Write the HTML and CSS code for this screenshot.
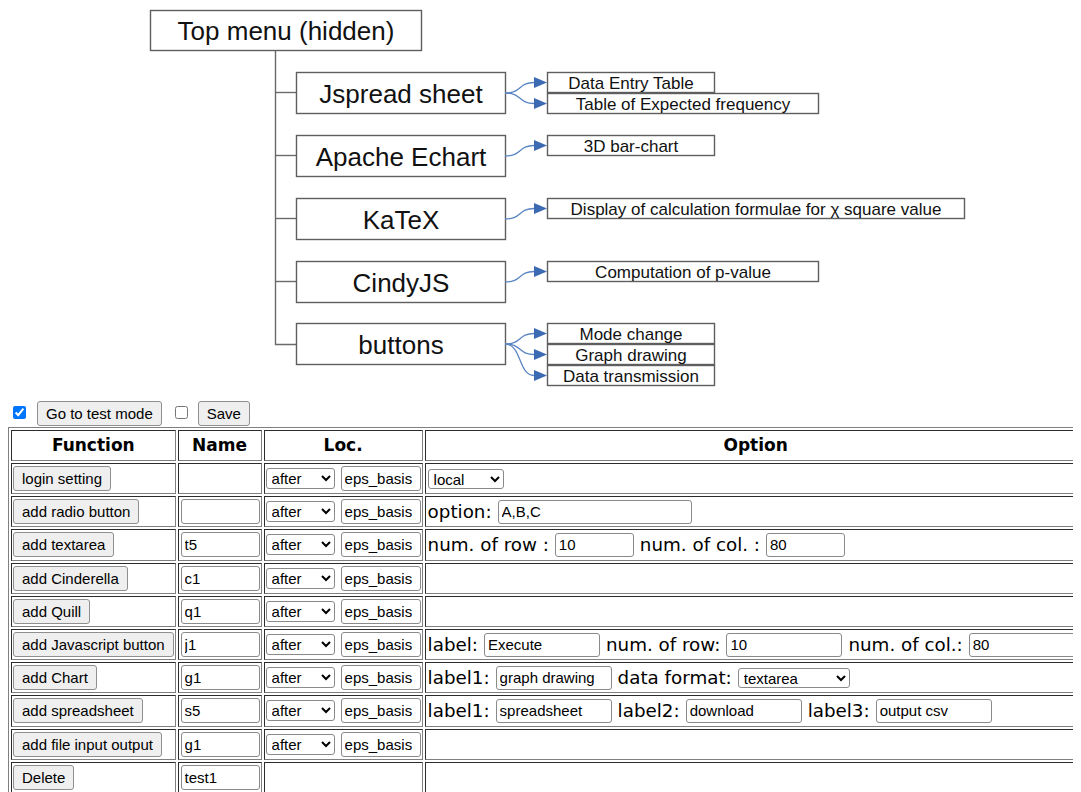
FILE: index.html
```html
<!DOCTYPE html>
<html lang="en">
<head>
<meta charset="utf-8">
<title>Menu editor</title>
<link rel="stylesheet" href="styles.css">
</head>
<body>
<svg class="menu-tree" width="970" height="392" viewBox="8 8 970 392" xmlns="http://www.w3.org/2000/svg">
  <defs>
    <marker id="arrow" viewBox="0 0 13 11" refX="0" refY="5.5" markerWidth="13" markerHeight="11" markerUnits="userSpaceOnUse" orient="auto">
      <path d="M0,0 L13,5.5 L0,11 Z" fill="#3d6bb3"/>
    </marker>
  </defs>

  <!-- trunk -->
  <g class="trunk">
    <path d="M275.5,50 V344.5 H296"/>
    <path d="M275.5,92.5 H296"/>
    <path d="M275.5,155.5 H296"/>
    <path d="M275.5,218.5 H296"/>
    <path d="M275.5,281.5 H296"/>
  </g>

  <!-- root -->
  <rect class="box" x="150.5" y="10.5" width="271" height="40"/>
  <text class="big" x="286" y="31">Top menu (hidden)</text>

  <!-- modules -->
  <rect class="box" x="296.5" y="72.5" width="209" height="41"/>
  <text class="big" x="401" y="93.5">Jspread sheet</text>
  <rect class="box" x="296.5" y="135.5" width="209" height="41"/>
  <text class="big" x="401" y="156.5">Apache Echart</text>
  <rect class="box" x="296.5" y="198.5" width="209" height="41"/>
  <text class="big" x="401" y="219.5">KaTeX</text>
  <rect class="box" x="296.5" y="261.5" width="209" height="41"/>
  <text class="big" x="401" y="282.5">CindyJS</text>
  <rect class="box" x="296.5" y="323.5" width="209" height="41"/>
  <text class="big" x="401" y="344.5">buttons</text>

  <!-- links to features -->
  <g class="link">
    <path d="M505,93 C522,93 518,82.5 534,82.5" marker-end="url(#arrow)"/>
    <path d="M505,93 C522,93 518,103.5 534,103.5" marker-end="url(#arrow)"/>
    <path d="M505,156 C522,156 518,145.5 534,145.5" marker-end="url(#arrow)"/>
    <path d="M505,219 C522,219 518,208.5 534,208.5" marker-end="url(#arrow)"/>
    <path d="M505,282 C522,282 518,271.5 534,271.5" marker-end="url(#arrow)"/>
    <path d="M505,344 C522,344 518,333.5 534,333.5" marker-end="url(#arrow)"/>
    <path d="M505,344 C522,344 518,354.5 534,354.5" marker-end="url(#arrow)"/>
    <path d="M505,344 C522,344 518,375.5 534,375.5" marker-end="url(#arrow)"/>
  </g>

  <!-- features -->
  <rect class="leaf" x="547.5" y="72.5" width="167" height="20"/>
  <text class="small" x="631" y="83">Data Entry Table</text>
  <rect class="leaf" x="547.5" y="93.5" width="271" height="20"/>
  <text class="small" x="683" y="104">Table of Expected frequency</text>
  <rect class="leaf" x="547.5" y="135.5" width="167" height="20"/>
  <text class="small" x="631" y="146">3D bar-chart</text>
  <rect class="leaf" x="547.5" y="198.5" width="417" height="20"/>
  <text class="small" x="756" y="209">Display of calculation formulae for χ square value</text>
  <rect class="leaf" x="547.5" y="261.5" width="271" height="20"/>
  <text class="small" x="683" y="272">Computation of p-value</text>
  <rect class="leaf" x="547.5" y="323.5" width="167" height="20"/>
  <text class="small" x="631" y="334">Mode change</text>
  <rect class="leaf" x="547.5" y="344.5" width="167" height="20"/>
  <text class="small" x="631" y="355">Graph drawing</text>
  <rect class="leaf" x="547.5" y="365.5" width="167" height="20"/>
  <text class="small" x="631" y="376">Data transmission</text>
</svg>

<div class="toolbar">
  <input type="checkbox" class="check" checked>
  <button class="btn btn-mode">Go to test mode</button>
  <input type="checkbox" class="check check-save">
  <button class="btn btn-save">Save</button>
</div>

<table class="grid">
  <tr>
    <th>Function</th>
    <th>Name</th>
    <th>Loc.</th>
    <th class="col-option">Option</th>
  </tr>
  <tr>
    <td><div class="cell"><button class="btn">login setting</button></div></td>
    <td><div class="cell"></div></td>
    <td><div class="cell"><select class="loc"><option>after</option></select><input class="basis" value="eps_basis"></div></td>
    <td><div class="cell opts"><select class="opt-sel sel-local"><option>local</option></select></div></td>
  </tr>
  <tr>
    <td><div class="cell"><button class="btn">add radio button</button></div></td>
    <td><div class="cell"><input class="name" value=""></div></td>
    <td><div class="cell"><select class="loc"><option>after</option></select><input class="basis" value="eps_basis"></div></td>
    <td><div class="cell opts"><span>option:</span><input class="opt opt-wide" value="A,B,C"></div></td>
  </tr>
  <tr>
    <td><div class="cell"><button class="btn">add textarea</button></div></td>
    <td><div class="cell"><input class="name" value="t5"></div></td>
    <td><div class="cell"><select class="loc"><option>after</option></select><input class="basis" value="eps_basis"></div></td>
    <td><div class="cell opts"><span>num. of row :</span><input class="opt opt-short" value="10"><span>num. of col. :</span><input class="opt opt-short" value="80"></div></td>
  </tr>
  <tr>
    <td><div class="cell"><button class="btn">add Cinderella</button></div></td>
    <td><div class="cell"><input class="name" value="c1"></div></td>
    <td><div class="cell"><select class="loc"><option>after</option></select><input class="basis" value="eps_basis"></div></td>
    <td><div class="cell"></div></td>
  </tr>
  <tr>
    <td><div class="cell"><button class="btn">add Quill</button></div></td>
    <td><div class="cell"><input class="name" value="q1"></div></td>
    <td><div class="cell"><select class="loc"><option>after</option></select><input class="basis" value="eps_basis"></div></td>
    <td><div class="cell"></div></td>
  </tr>
  <tr>
    <td><div class="cell"><button class="btn">add Javascript button</button></div></td>
    <td><div class="cell"><input class="name" value="j1"></div></td>
    <td><div class="cell"><select class="loc"><option>after</option></select><input class="basis" value="eps_basis"></div></td>
    <td><div class="cell opts"><span>label:</span><input class="opt" value="Execute"><span>num. of row:</span><input class="opt" value="10"><span>num. of col.:</span><input class="opt" value="80"></div></td>
  </tr>
  <tr>
    <td><div class="cell"><button class="btn">add Chart</button></div></td>
    <td><div class="cell"><input class="name" value="g1"></div></td>
    <td><div class="cell"><select class="loc"><option>after</option></select><input class="basis" value="eps_basis"></div></td>
    <td><div class="cell opts"><span>label1:</span><input class="opt" value="graph drawing"><span>data format:</span><select class="opt-sel sel-format"><option>textarea</option></select></div></td>
  </tr>
  <tr>
    <td><div class="cell"><button class="btn">add spreadsheet</button></div></td>
    <td><div class="cell"><input class="name" value="s5"></div></td>
    <td><div class="cell"><select class="loc"><option>after</option></select><input class="basis" value="eps_basis"></div></td>
    <td><div class="cell opts"><span>label1:</span><input class="opt" value="spreadsheet"><span>label2:</span><input class="opt" value="download"><span>label3:</span><input class="opt" value="output csv"></div></td>
  </tr>
  <tr>
    <td><div class="cell"><button class="btn">add file input output</button></div></td>
    <td><div class="cell"><input class="name" value="g1"></div></td>
    <td><div class="cell"><select class="loc"><option>after</option></select><input class="basis" value="eps_basis"></div></td>
    <td><div class="cell"></div></td>
  </tr>
  <tr>
    <td><div class="cell"><button class="btn">Delete</button></div></td>
    <td><div class="cell"><input class="name" value="test1"></div></td>
    <td><div class="cell"></div></td>
    <td><div class="cell"></div></td>
  </tr>
</table>
</body>
</html>
```

FILE: styles.css
```css
html, body {
  overflow: hidden;
}

body {
  margin: 8px;
  background: #fff;
  color: #000;
  font-family: "DejaVu Sans", Verdana, sans-serif;
}

/* ---------- menu tree ---------- */
.menu-tree {
  display: block;
}

.menu-tree .box,
.menu-tree .leaf {
  fill: #fff;
  stroke: #5e5e5e;
  stroke-width: 1.4;
}

.menu-tree .trunk path {
  fill: none;
  stroke: #6a6a6a;
  stroke-width: 1.4;
}

.menu-tree .link path {
  fill: none;
  stroke: #5a85c4;
  stroke-width: 1.3;
}

.menu-tree text {
  font-family: "Liberation Sans", Arial, sans-serif;
  text-anchor: middle;
  dominant-baseline: central;
  fill: #111;
}

.menu-tree .big {
  font-size: 26px;
}

.menu-tree .small {
  font-size: 17px;
}

/* ---------- toolbar ---------- */
.toolbar {
  display: flex;
  align-items: center;
  height: 27px;
}

.check {
  width: 13px;
  height: 13px;
  margin: 0 0 2px 5px;
}

.btn-mode {
  margin-left: 11px;
}

.check-save {
  margin-left: 13px;
}

.btn-save {
  margin-left: 10px;
}

/* ---------- controls ---------- */
.btn {
  font-family: "Liberation Sans", Arial, sans-serif;
  font-size: 15px;
  line-height: 17px;
  padding: 3px 8px;
  color: #000;
  background: #efefef;
  border: 1px solid #8f8f8f;
  border-radius: 3px;
}

input, select {
  font-family: "Liberation Sans", Arial, sans-serif;
  color: #000;
  box-sizing: border-box;
  margin: 0;
}

.name,
.basis {
  font-size: 15px;
  height: 25px;
  padding: 1px 3px;
  border: 1px solid #8a8a8a;
  border-radius: 3px;
}

.name {
  width: 79px;
  margin-left: 1px;
}

.basis {
  width: 80px;
}

.loc {
  font-size: 15px;
  width: 69px;
  height: 21px;
  padding: 0 1px;
  border: 1px solid #8a8a8a;
  border-radius: 3px;
  background: #fff;
}

.opt {
  font-size: 15px;
  width: 116px;
  height: 24px;
  padding: 1px 3px;
  border: 1px solid #8a8a8a;
  border-radius: 3px;
}

.opt-wide {
  width: 194px;
}

.opt-short {
  width: 79px;
}

.opt-sel {
  font-size: 15px;
  height: 20px;
  padding: 0 1px;
  border: 1px solid #8a8a8a;
  border-radius: 3px;
  background: #fff;
}

.sel-local {
  width: 76px;
}

.sel-format {
  width: 112px;
}

/* ---------- settings table ---------- */
.grid {
  border: 1px outset #808080;
  border-spacing: 2px;
  white-space: nowrap;
}

.grid th,
.grid td {
  border: 1px inset #808080;
  padding: 1px;
  font-size: 18px;
  vertical-align: middle;
}

.grid th {
  font-weight: bold;
  font-size: 17px;
  line-height: 27px;
  text-align: center;
}

.cell {
  display: flex;
  align-items: center;
  gap: 6px;
  height: 27.2px;
}

.cell.opts {
  padding-left: 1px;
}

.opts span {
  font-size: 18.3px;
}
```
